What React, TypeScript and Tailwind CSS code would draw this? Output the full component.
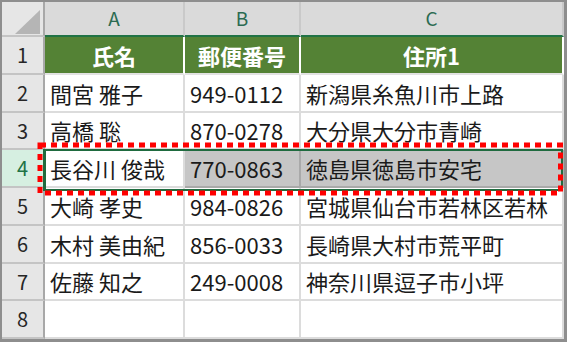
import React from 'react';

const rows: [string, string, string][] = [
  ['間宮 雅子', '949-0112', '新潟県糸魚川市上路'],
  ['高橋 聡', '870-0278', '大分県大分市青崎'],
  ['長谷川 俊哉', '770-0863', '徳島県徳島市安宅'],
  ['大崎 孝史', '984-0826', '宮城県仙台市若林区若林'],
  ['木村 美由紀', '856-0033', '長崎県大村市荒平町'],
  ['佐藤 知之', '249-0008', '神奈川県逗子市小坪'],
];

const font = "font-['Noto_Sans_CJK_JP',sans-serif]";

const RowHead = ({ n, active }: { n: number; active?: boolean }) => (
  <div
    className={`flex items-center justify-center border-r-2 border-b-2 border-r-[#a8a8a8] border-b-[#c4c4c4] text-[20px] ${
      active ? 'bg-[#d6efe1] text-[#217346]' : 'bg-[#e6e6e6] text-[#262626]'
    }`}
  >
    {n}
  </div>
);

const Cell = ({ text, selected }: { text?: string; selected?: boolean }) => (
  <div
    className={`flex items-center whitespace-nowrap px-[5px] border-r-2 border-b-2 text-[22px] text-[#1a1a1a] ${
      selected ? 'bg-[#c6c6c6] border-[#a9a9a9]' : 'bg-white border-[#dcdcdc]'
    }`}
  >
    {text}
  </div>
);

export default function App() {
  return (
    <div className={`relative w-[567px] h-[342px] bg-white ${font}`}>
      <div className="w-full h-full border-l-2 border-t-2 border-r-[3px] border-b-[3px] border-[#8e8e8e]">
        <div className="relative grid grid-cols-[43px_140px_116px_263px] grid-rows-[35px_38px_38px_37px_38px_38px_38px_37px_38px]">
          {/* column headers */}
          <div className="relative bg-[#e6e6e6] border-r-2 border-b-2 border-r-[#a8a8a8] border-b-[#c4c4c4]">
            <svg className="absolute left-[13px] top-[8px]" width="25" height="24" viewBox="0 0 25 24">
              <polygon points="25,0 25,24 0,24" fill="#b5b5b5" />
            </svg>
          </div>
          {['A', 'B', 'C'].map((c) => (
            <div
              key={c}
              className="flex items-center justify-center bg-[#dadada] border-r-2 border-r-[#c9c9c9] border-b-2 border-b-[#217346] text-[19px] text-[#2b6b52]"
            >
              {c}
            </div>
          ))}

          {/* row 1: table header */}
          <RowHead n={1} />
          {['氏名', '郵便番号', '住所1'].map((h) => (
            <div
              key={h}
              className="flex items-center justify-center bg-[#548235] border-r-2 border-r-white border-b-2 border-b-[#e2e2e2] text-[22px] font-bold text-white"
            >
              {h}
            </div>
          ))}

          {rows.map((r, i) => {
            const active = i === 2;
            return (
              <React.Fragment key={i}>
                <RowHead n={i + 2} active={active} />
                <Cell text={r[0]} />
                <Cell text={r[1]} selected={active} />
                <Cell text={r[2]} selected={active} />
              </React.Fragment>
            );
          })}

          <RowHead n={8} />
          <Cell />
          <Cell />
          <Cell />

          {/* selection border */}
          <div className="absolute left-[41px] top-[147px] w-[520px] h-[42px] border-2 border-l-[3px] border-[#1f6b3f] pointer-events-none" />
        </div>
      </div>

      {/* red dotted annotation */}
      <svg className="absolute inset-0 pointer-events-none" width="567" height="342">
        <rect
          x="40"
          y="145"
          width="520.5"
          height="48"
          fill="none"
          stroke="#ff0000"
          strokeWidth="5"
          strokeDasharray="6 5"
        />
      </svg>
    </div>
  );
}
